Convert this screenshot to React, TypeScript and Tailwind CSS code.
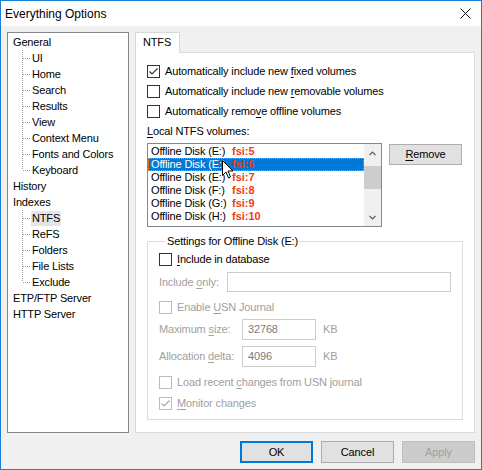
import type { ReactNode } from "react";

const font = { fontFamily: '"Liberation Sans", Arial, sans-serif' };

type TreeNode = { label: string; children?: string[]; selected?: string };

const tree: TreeNode[] = [
  { label: "General", children: ["UI", "Home", "Search", "Results", "View", "Context Menu", "Fonts and Colors", "Keyboard"] },
  { label: "History" },
  { label: "Indexes", children: ["NTFS", "ReFS", "Folders", "File Lists", "Exclude"], selected: "NTFS" },
  { label: "ETP/FTP Server" },
  { label: "HTTP Server" },
];

const volumes = [
  { name: "Offline Disk (E:)", fsi: "fsi:5" },
  { name: "Offline Disk (E:)", fsi: "fsi:6" },
  { name: "Offline Disk (E:)", fsi: "fsi:7" },
  { name: "Offline Disk (F:)", fsi: "fsi:8" },
  { name: "Offline Disk (G:)", fsi: "fsi:9" },
  { name: "Offline Disk (H:)", fsi: "fsi:10" },
];

function Connector({ last }: { last: boolean }) {
  return (
    <svg width="9" height="16" className="shrink-0">
      <line x1="0.5" y1="0" x2="0.5" y2={last ? 8 : 16} stroke="#a0a0a0" strokeDasharray="1 1" />
      <line x1="1" y1="8.5" x2="9" y2="8.5" stroke="#a0a0a0" strokeDasharray="1 1" />
    </svg>
  );
}

function Checkbox({ checked, disabled }: { checked?: boolean; disabled?: boolean }) {
  const c = disabled ? "#bcbcbc" : "#333333";
  return (
    <svg width="13" height="13" className="shrink-0">
      <rect x="0.5" y="0.5" width="12" height="12" fill="#fff" stroke={c} />
      {checked && <polyline points="2.5,6.5 5,9 10.5,3.5" fill="none" stroke={disabled ? "#a8a8a8" : "#333"} strokeWidth="1.2" />}
    </svg>
  );
}

function CheckRow({ children, checked, disabled, className = "" }: { children: ReactNode; checked?: boolean; disabled?: boolean; className?: string }) {
  return (
    <div className={`flex items-center h-[20px] ${className}`}>
      <Checkbox checked={checked} disabled={disabled} />
      <span className={`ml-[5px] ${disabled ? "text-[#a0a0a0]" : ""}`}>{children}</span>
    </div>
  );
}

const U = ({ children }: { children: ReactNode }) => <u className="underline-offset-[2px]">{children}</u>;

function Chevron({ up }: { up?: boolean }) {
  return (
    <svg width="7" height="5">
      <polyline points={up ? "0.5,4 3.5,1 6.5,4" : "0.5,1 3.5,4 6.5,1"} fill="none" stroke="#606060" strokeWidth="1.2" />
    </svg>
  );
}

function Cursor() {
  return (
    <svg width="12" height="19" viewBox="0 0 12 19" className="absolute left-[74px] top-[16px]">
      <path d="M0.5 0.5 L0.5 15.5 L4 12 L6.5 18 L8.5 17 L6 11 L11 11 Z" fill="#fff" stroke="#000" strokeLinejoin="miter" />
    </svg>
  );
}

function Field({ value, className }: { value?: string; className: string }) {
  return (
    <div className={`h-full border border-[#cccccc] bg-white pl-[5px] flex items-center text-[#7a7a7a] ${className}`}>{value}</div>
  );
}

export default function App() {
  return (
    <div style={font} className="w-[482px] h-[470px] border border-[#1a7fd4] flex flex-col text-[11px] tracking-[-0.15px] text-black select-none">
      {/* title bar */}
      <div className="h-[25px] bg-white flex items-center pl-[4px] pr-[10px] shrink-0">
        <span className="text-[12px] tracking-normal">Everything Options</span>
        <svg width="11" height="11" className="ml-auto">
          <path d="M0.5 0.5 L10.5 10.5 M10.5 0.5 L0.5 10.5" stroke="#111" strokeWidth="1" />
        </svg>
      </div>

      <div className="flex-1 bg-[#f0f0f0] pt-[6px] px-[6px] flex flex-col">
        <div className="flex gap-[6px] h-[401px]">
          {/* options tree */}
          <div className="w-[122px] border border-[#828790] bg-white pt-[1px]">
            {tree.map((node) => (
              <div key={node.label}>
                <div className="h-[16px] leading-[16px] pl-[5px]">{node.label}</div>
                {node.children?.map((child, i) => (
                  <div key={child} className="h-[16px] flex items-center pl-[14px]">
                    <Connector last={i === node.children!.length - 1} />
                    <span className={`px-[1px] leading-[15px] ${node.selected === child ? "bg-[#e5e5e5]" : ""}`}>{child}</span>
                  </div>
                ))}
              </div>
            ))}
          </div>

          {/* tab control */}
          <div className="flex-1 flex flex-col">
            <div className="h-[20px] flex">
              <div className="relative z-10 w-[45px] h-[21px] bg-white border border-b-0 border-[#d9d9d9] pl-[7px] leading-[19px]">NTFS</div>
            </div>
            <div className="flex-1 bg-white border border-[#d9d9d9] pl-[11px] pt-[8px]">
              <CheckRow checked>
                Automatically include new <U>f</U>ixed volumes
              </CheckRow>
              <CheckRow>
                Automatically include new <U>r</U>emovable volumes
              </CheckRow>
              <CheckRow>
                Automatically remo<U>v</U>e offline volumes
              </CheckRow>
              <div className="h-[20px] flex items-center">
                <span><U>L</U>ocal NTFS volumes:</span>
              </div>

              <div className="flex items-start mt-[2px]">
                <div className="relative w-[235px] h-[84px] border border-[#828790] flex">
                  <div className="flex-1 pt-[1px]">
                    {volumes.map((v, i) => {
                      const sel = i === 1;
                      return (
                        <div
                          key={v.fsi}
                          className={`h-[13px] flex items-center pl-[2px] border ${sel ? "bg-[#0078d7] text-white border-dotted border-[#ff8728]" : "border-transparent"}`}
                        >
                          <span className="w-[81px]">{v.name}</span>
                          <span className="font-bold text-[#f23c0f] tracking-normal">{v.fsi}</span>
                        </div>
                      );
                    })}
                  </div>
                  <div className="w-[17px] bg-[#f0f0f0] flex flex-col">
                    <div className="h-[17px] flex items-center justify-center pt-[2px]">
                      <Chevron up />
                    </div>
                    <div className="flex-1 pt-[5px]">
                      <div className="h-[23px] bg-[#cdcdcd] mx-[0px]" />
                    </div>
                    <div className="h-[17px] flex items-center justify-center">
                      <Chevron />
                    </div>
                  </div>
                  <Cursor />
                </div>
                <button className="ml-[7px] mt-[1px] w-[73px] h-[21px] bg-[#e1e1e1] border border-[#adadad]">
                  <U>R</U>emove
                </button>
              </div>

              {/* per-volume settings */}
              <fieldset className="mt-[7px] w-[316px] border border-[#dcdcdc] pl-[11px] pb-[6px]">
                <legend className="ml-[7px] px-[1px] leading-[14px]">Settings for Offline Disk (E:)</legend>
                <CheckRow className="mt-[1px]">
                  <U>I</U>nclude in database
                </CheckRow>
                <div className="mt-[3px] h-[20px] flex items-center text-[#a0a0a0]">
                  <span className="w-[68px]">
                    Include <U>o</U>nly:
                  </span>
                  <Field className="w-[224px]" />
                </div>
                <CheckRow disabled className="mt-[5px]">
                  Enable <U>U</U>SN Journal
                </CheckRow>
                <div className="mt-[2px] h-[21px] flex items-center text-[#a0a0a0]">
                  <span className="w-[83px]">
                    Maximum <U>s</U>ize:
                  </span>
                  <Field value="32768" className="w-[74px]" />
                  <span className="ml-[7px]">KB</span>
                </div>
                <div className="mt-[6px] h-[21px] flex items-center text-[#a0a0a0]">
                  <span className="w-[83px]">
                    Allocation <U>d</U>elta:
                  </span>
                  <Field value="4096" className="w-[74px]" />
                  <span className="ml-[7px]">KB</span>
                </div>
                <CheckRow disabled className="mt-[5px]">
                  Load recent <U>c</U>hanges from USN journal
                </CheckRow>
                <CheckRow disabled checked className="mt-[1px]">
                  <U>M</U>onitor changes
                </CheckRow>
              </fieldset>
            </div>
          </div>
        </div>

        {/* dialog buttons */}
        <div className="mt-[8px] flex justify-end gap-[8px]">
          <button className="w-[73px] h-[22px] bg-[#e1e1e1] border-2 border-[#0078d7]">OK</button>
          <button className="w-[73px] h-[22px] bg-[#e1e1e1] border border-[#adadad]">Cancel</button>
          <button className="w-[73px] h-[22px] bg-[#cccccc] border border-[#bfbfbf] text-[#a0a0a0]">Apply</button>
        </div>
      </div>
    </div>
  );
}
